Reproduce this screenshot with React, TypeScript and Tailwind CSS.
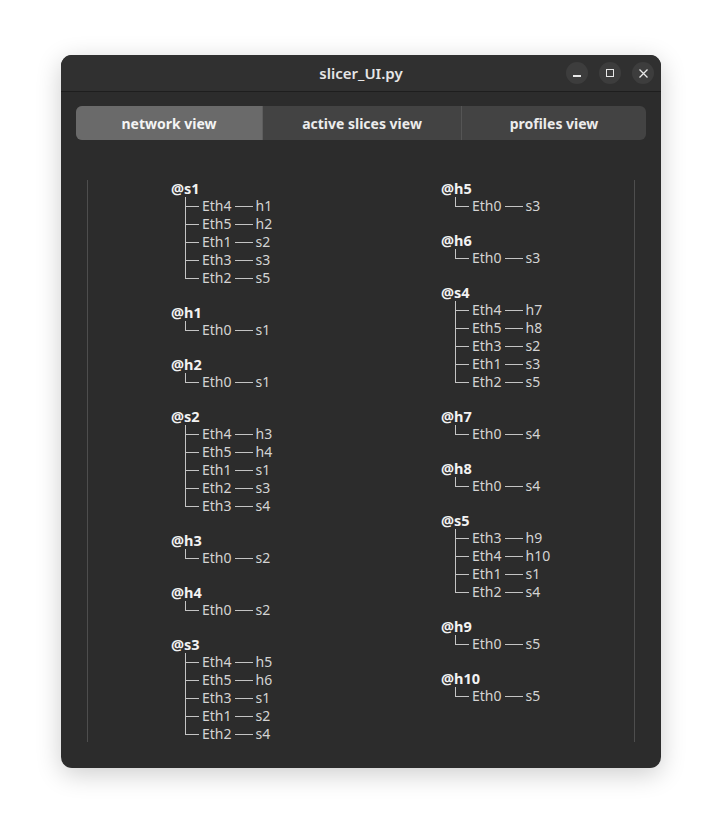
import React from "react";

type Group = { name: string; links: [string, string][] };

const LEFT: Group[] = [
  { name: "@s1", links: [["Eth4", "h1"], ["Eth5", "h2"], ["Eth1", "s2"], ["Eth3", "s3"], ["Eth2", "s5"]] },
  { name: "@h1", links: [["Eth0", "s1"]] },
  { name: "@h2", links: [["Eth0", "s1"]] },
  { name: "@s2", links: [["Eth4", "h3"], ["Eth5", "h4"], ["Eth1", "s1"], ["Eth2", "s3"], ["Eth3", "s4"]] },
  { name: "@h3", links: [["Eth0", "s2"]] },
  { name: "@h4", links: [["Eth0", "s2"]] },
  { name: "@s3", links: [["Eth4", "h5"], ["Eth5", "h6"], ["Eth3", "s1"], ["Eth1", "s2"], ["Eth2", "s4"]] },
];

const RIGHT: Group[] = [
  { name: "@h5", links: [["Eth0", "s3"]] },
  { name: "@h6", links: [["Eth0", "s3"]] },
  { name: "@s4", links: [["Eth4", "h7"], ["Eth5", "h8"], ["Eth3", "s2"], ["Eth1", "s3"], ["Eth2", "s5"]] },
  { name: "@h7", links: [["Eth0", "s4"]] },
  { name: "@h8", links: [["Eth0", "s4"]] },
  { name: "@s5", links: [["Eth3", "h9"], ["Eth4", "h10"], ["Eth1", "s1"], ["Eth2", "s4"]] },
  { name: "@h9", links: [["Eth0", "s5"]] },
  { name: "@h10", links: [["Eth0", "s5"]] },
];

function Link({ port, peer, last }: { port: string; peer: string; last: boolean }) {
  return (
    <div className="flex h-[18px] items-center text-[14px] leading-[18px] text-[#d4d4d4]">
      <div className="relative ml-[14px] h-full w-[17px]">
        <span className={last ? "absolute left-0 top-0 h-[9px] w-px bg-[#c4c4c4]" : "absolute left-0 top-0 h-full w-px bg-[#c4c4c4]"} />
        <span className="absolute left-0 top-[9px] h-px w-[14px] bg-[#c4c4c4]" />
      </div>
      <span>{port}</span>
      <span className="mx-[3px] h-px w-[18px] bg-[#c4c4c4]" />
      <span>{peer}</span>
    </div>
  );
}

function Tree({ groups }: { groups: Group[] }) {
  return (
    <div className="flex flex-col gap-[17px]">
      {groups.map((g) => (
        <div key={g.name}>
          <div className="h-[17px] text-[14.5px] font-bold leading-[17px] text-[#f2f2f2]">{g.name}</div>
          {g.links.map(([port, peer], i) => (
            <Link key={port} port={port} peer={peer} last={i === g.links.length - 1} />
          ))}
        </div>
      ))}
    </div>
  );
}

export default function App() {
  return (
    <div className="min-h-screen bg-white pl-[61px] pt-[55px]" style={{ fontFamily: '"Noto Sans", "Liberation Sans", sans-serif' }}>
      <div className="flex h-[713px] w-[600px] flex-col overflow-hidden rounded-[11px] bg-[#2c2c2c] shadow-[0_6px_26px_rgba(0,0,0,0.2)]">
        {/* title bar */}
        <div className="relative flex h-[37px] shrink-0 items-center justify-center border-b border-[#1e1e1e] bg-[#303030]">
          <span className="text-[15px] font-semibold text-[#e6e6e6]">slicer_UI.py</span>
          <div className="absolute right-[7px] top-[7px] flex gap-[11px]">
            <button className="flex h-[22px] w-[22px] items-center justify-center rounded-full bg-[#3d3d3d]">
              <span className="mt-[6px] h-[1.5px] w-[8px] bg-[#e8e8e8]" />
            </button>
            <button className="flex h-[22px] w-[22px] items-center justify-center rounded-full bg-[#3d3d3d]">
              <span className="h-[8px] w-[8px] border border-[#e8e8e8]" />
            </button>
            <button className="flex h-[22px] w-[22px] items-center justify-center rounded-full bg-[#3d3d3d]">
              <svg width="9" height="9" viewBox="0 0 9 9" stroke="#e8e8e8" strokeWidth="1.3">
                <path d="M0.5 0.5 L8.5 8.5 M8.5 0.5 L0.5 8.5" />
              </svg>
            </button>
          </div>
        </div>

        {/* body */}
        <div className="flex flex-1 flex-col px-[15px] pt-[14px]">
          <div className="flex h-[34px] overflow-hidden rounded-[6px] bg-[#434343] text-[14px] font-bold">
            <div className="flex w-[186px] items-center justify-center bg-[#6a6a6a] text-[#f4f4f4]">network view</div>
            <div className="flex w-[199px] items-center justify-center border-l border-[#5e5e5e] text-[#ececec]">active slices view</div>
            <div className="flex flex-1 items-center justify-center border-l border-[#555555] text-[#ececec]">profiles view</div>
          </div>

          <div className="mx-[11px] mt-[40px] grid h-[562px] grid-cols-2 border-x border-[#4e4e4e]">
            <div className="pl-[83px]">
              <Tree groups={LEFT} />
            </div>
            <div className="pl-[80px]">
              <Tree groups={RIGHT} />
            </div>
          </div>
        </div>
      </div>
    </div>
  );
}
